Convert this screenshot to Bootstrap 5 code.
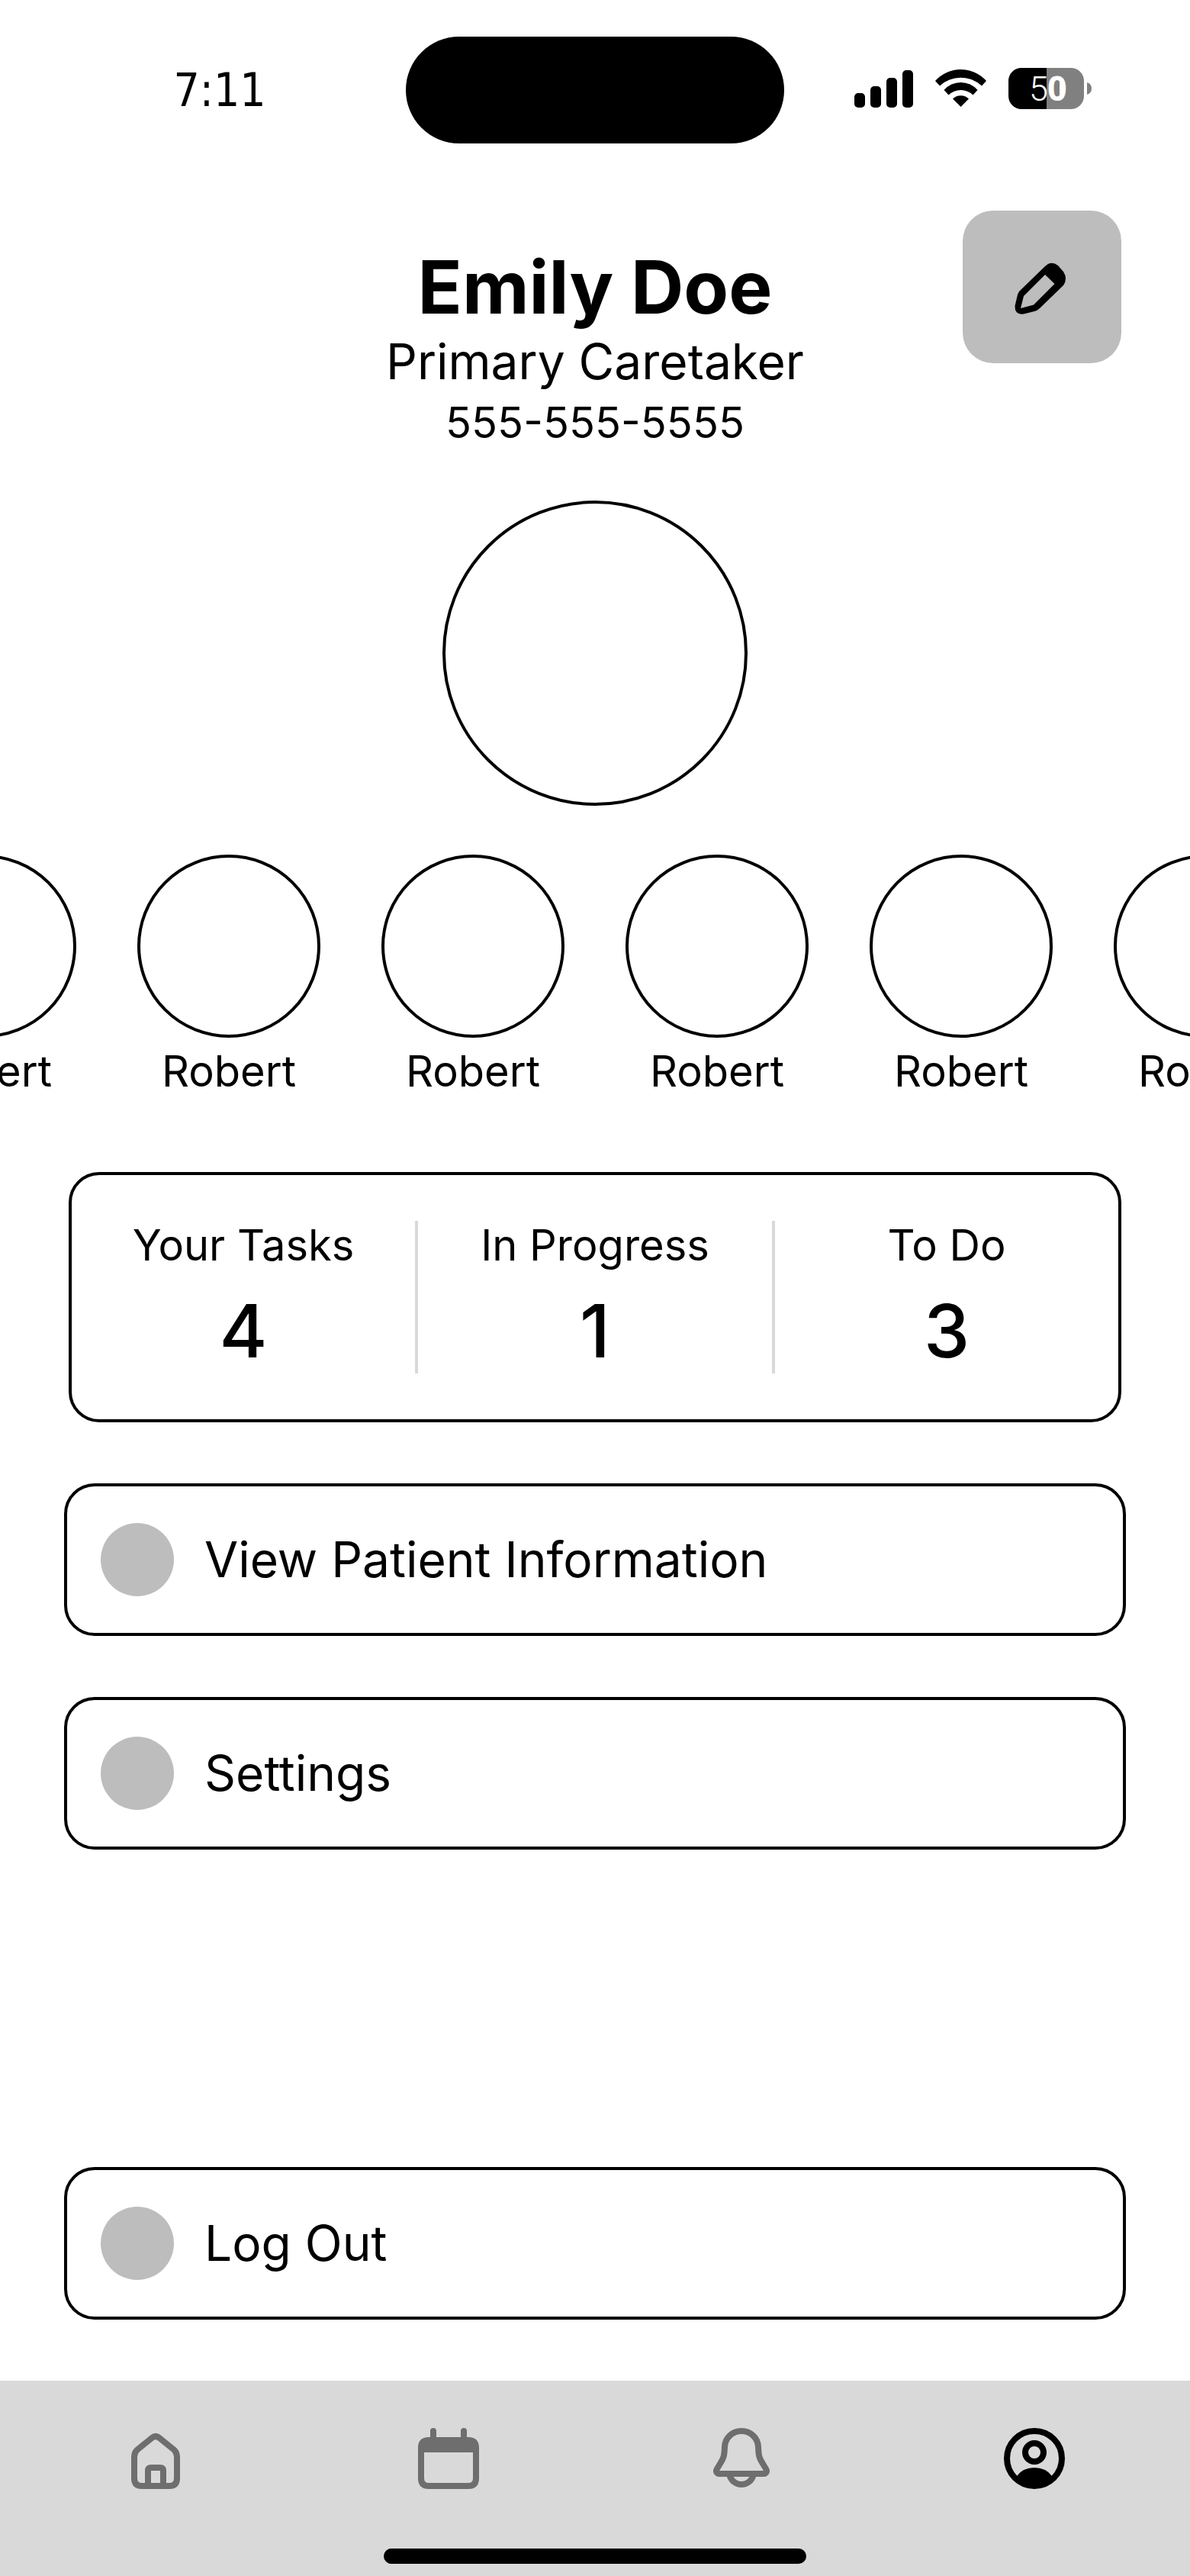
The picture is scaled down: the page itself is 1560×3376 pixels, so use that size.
<!DOCTYPE html>
<html lang="en">
<head>
<meta charset="utf-8">
<meta name="viewport" content="width=device-width, initial-scale=1">
<title>Profile</title>
<link href="https://cdn.jsdelivr.net/npm/bootstrap@5.3.0/dist/css/bootstrap.min.css" rel="stylesheet">
<style>
  body { font-family: Inter, "Liberation Sans", sans-serif; color: #000; background: #fff; }
  svg { display: block; flex: none; }

  /* status bar */
  .status-bar { display: grid; grid-template-columns: 1fr auto 1fr; padding-top: 48px; }
  .status-time { font-family: "DejaVu Sans Condensed", "DejaVu Sans", sans-serif; font-size: 60px; line-height: 64px; padding-left: 44px; }
  .status-icons { gap: 28px; padding-right: 36px; }
  .island { width: 496px; height: 140px; background: #000; }

  /* profile heading */
  .profile-head { display: grid; grid-template-columns: 1fr auto 1fr; padding: 88px 90px 0; }
  .profile-text { grid-column: 2; padding-top: 42px; }
  .profile-name { font-size: 96px; line-height: 116px; font-weight: 700; }
  .profile-role { font-size: 64px; line-height: 80px; }
  .profile-phone { font-size: 56px; line-height: 80px; }
  .edit-btn { width: 208px; height: 200px; border-radius: 40px; background: #bdbdbd; color: #000; }
  .edit-btn:hover { background: #b0b0b0; }

  .ring { border: 4px solid #000; }
  .ring-lg { width: 400px; height: 400px; margin: 62px auto 64px; }
  .ring-sm { width: 240px; height: 240px; margin-bottom: 8px; }
  .people { gap: 80px; }
  .person { font-size: 56px; line-height: 72px; }

  /* task counts */
  .outlined { border: 4px solid #000; border-radius: 40px; }
  .counts { display: grid; grid-template-columns: 225fr 236fr 225fr; margin: 96px 90px 80px; padding: 60px 0; }
  .count-mid { border: solid #d9d9d9; border-width: 0 4px; }
  .count-label { font-size: 56px; line-height: 64px; margin-bottom: 24px; font-weight: 400; }
  .count-value { font-size: 96px; line-height: 112px; font-weight: 500; }

  /* menu rows */
  .menu-list { gap: 80px; padding: 0 84px 80px; }
  .menu-row { gap: 40px; height: 200px; padding: 0 44px; font-size: 64px; line-height: 80px; color: #000; background: #fff; }
  .menu-row:hover { color: #000; background: #f5f5f5; border-color: #000; }
  .menu-dot { width: 96px; height: 96px; background: #bdbdbd; flex: none; }

  /* tab bar */
  .tab-bar { background: #d9d9d9; padding: 54px 12px 16px; }
  .tab-bar a { color: #6e6e6e; }
  .tab-bar a.active { color: #000; }
  .home-indicator { width: 554px; height: 20px; background: #000; margin: 70px auto 0; }
</style>
</head>
<body>
<div class="d-flex flex-column min-vh-100 overflow-hidden">

  <header>
    <div class="status-bar align-items-center">
      <div class="status-time text-center">7:11</div>
      <div class="island rounded-pill"></div>
      <div class="status-icons d-flex justify-content-center align-items-center">
        <svg width="78" height="60" viewBox="0 0 78 60" role="img" aria-label="Signal">
          <rect x="0" y="34" width="14" height="19" rx="5"/><rect x="21" y="25" width="14" height="28" rx="5"/>
          <rect x="42" y="14" width="14" height="39" rx="5"/><rect x="63" y="4" width="14" height="49" rx="5"/>
        </svg>
        <svg width="68" height="60" viewBox="0 0 68 60" role="img" aria-label="Wi-Fi">
          <path d="M0 18A45 45 0 0 1 67 18L61 24.500A40.500 40.500 0 0 0 6 24.500Z"/>
          <path d="M11.500 30A29 29 0 0 1 55.500 30L49.500 36.500A23 23 0 0 0 17.500 36.500Z"/>
          <path d="M23 41.500A15 15 0 0 1 44 41.500L33.500 52Z"/>
        </svg>
        <svg width="110" height="60" viewBox="0 0 110 60" role="img" aria-label="Battery 50 percent">
          <path d="M50 1H17A17 17 0 0 0 0 18V38A17 17 0 0 0 17 55H50Z"/>
          <path fill="#808080" d="M50 1H82A17 17 0 0 1 99 18V38A17 17 0 0 1 82 55H50Z"/>
          <path fill="#808080" d="M103 20Q109 22 109 28Q109 34 103 36Z"/>
          <path stroke="#fff" stroke-width="2" d="M68 18V38"/>
          <text x="27" y="44" fill="#fff" font-family="Roboto" font-weight="300" font-size="45">5</text>
          <text x="51" y="44" fill="#fff" font-family="Open Sans" font-weight="700" font-size="45">0</text>
        </svg>
      </div>
    </div>

    <div class="profile-head">
      <div class="profile-text text-center">
        <h1 class="profile-name mb-0">Emily Doe</h1>
        <div class="profile-role">Primary Caretaker</div>
        <div class="profile-phone">555-555-5555</div>
      </div>
      <button type="button" class="edit-btn btn border-0 p-0 d-flex align-items-center justify-content-center ms-auto" aria-label="Edit profile">
        <svg width="96" height="96" viewBox="0 0 96 96" fill="currentColor">
          <path fill-rule="evenodd" d="M21 51L52 21Q60 13 69 20L76 28Q82 37 76 46L45 76Q42 79 38 80L24 83.500Q12 85 12.500 73L16 58Q17 54 21 51ZM24 60L20 76L37 71.500L64.500 44L52 32Z"/>
        </svg>
      </button>
    </div>
  </header>

  <main class="d-flex flex-column flex-grow-1">
    <div class="ring ring-lg rounded-circle"></div>

    <ul class="people list-unstyled d-flex justify-content-center mb-0">
      <li class="person text-center"><div class="ring ring-sm rounded-circle"></div>Robert</li>
      <li class="person text-center"><div class="ring ring-sm rounded-circle"></div>Robert</li>
      <li class="person text-center"><div class="ring ring-sm rounded-circle"></div>Robert</li>
      <li class="person text-center"><div class="ring ring-sm rounded-circle"></div>Robert</li>
      <li class="person text-center"><div class="ring ring-sm rounded-circle"></div>Robert</li>
      <li class="person text-center"><div class="ring ring-sm rounded-circle"></div>Robert</li>
    </ul>

    <section class="counts outlined text-center" aria-label="Tasks">
      <div><h2 class="count-label">Your Tasks</h2><div class="count-value">4</div></div>
      <div class="count-mid"><h2 class="count-label">In Progress</h2><div class="count-value">1</div></div>
      <div><h2 class="count-label">To Do</h2><div class="count-value">3</div></div>
    </section>

    <div class="menu-list d-flex flex-column flex-grow-1">
      <button type="button" class="menu-row outlined btn d-flex align-items-center text-start"><span class="menu-dot rounded-circle"></span>View Patient Information</button>
      <button type="button" class="menu-row outlined btn d-flex align-items-center text-start"><span class="menu-dot rounded-circle"></span>Settings</button>
      <button type="button" class="menu-row outlined btn d-flex align-items-center text-start mt-auto"><span class="menu-dot rounded-circle"></span>Log Out</button>
    </div>
  </main>

  <footer class="tab-bar">
    <nav class="nav nav-fill flex-nowrap" aria-label="Main">
      <a class="nav-item d-flex justify-content-center" href="#home" aria-label="Home">
        <svg width="96" height="96" viewBox="0 0 96 96" fill="none" stroke="currentColor" stroke-width="8">
          <path d="M20 46Q20 40 24 36.500L42.500 21.500Q48 16.500 53.500 21.500L72 36.500Q76 40 76 46V74Q76 84 66 84H30Q20 84 20 74Z"/>
          <path d="M38 84V64Q38 60 42 60H54Q58 60 58 64V84"/>
        </svg>
      </a>
      <a class="nav-item d-flex justify-content-center" href="#calendar" aria-label="Calendar">
        <svg width="96" height="96" viewBox="0 0 96 96" fill="none" stroke="currentColor" stroke-width="8">
          <path d="M12 34Q12 24 22 24H74Q84 24 84 34V74Q84 84 74 84H22Q12 84 12 74Z"/>
          <path d="M14 32H82" stroke-width="16"/>
          <path d="M28 24V12M68 24V12" stroke-linecap="round"/>
        </svg>
      </a>
      <a class="nav-item d-flex justify-content-center" href="#alerts" aria-label="Notifications">
        <svg width="96" height="96" viewBox="0 0 96 96" fill="none" stroke="currentColor" stroke-width="8">
          <path d="M48 12C36 12 26.500 21 26 33C25.500 44 25 47 20.500 54L16 61.500C13.500 65.500 16 68 19 68H77C80 68 82.500 65.500 80 61.500L75.500 54C71 47 70.500 44 70 33C69.500 21 60 12 48 12Z"/>
          <path d="M32.500 70A16 16 0 0 0 63.500 70"/>
        </svg>
      </a>
      <a class="nav-item d-flex justify-content-center active" href="#profile" aria-label="Profile" aria-current="page">
        <svg width="96" height="96" viewBox="0 0 96 96" fill="none" stroke="currentColor" stroke-width="8">
          <circle cx="48" cy="48" r="36"/>
          <circle cx="48" cy="40" r="12"/>
          <path fill="currentColor" stroke="none" d="M25 71Q33 60 48 60Q63 60 71 71Q62 86 48 86Q34 86 25 71Z"/>
        </svg>
      </a>
    </nav>
    <div class="home-indicator rounded-pill"></div>
  </footer>
</div>
<script src="https://cdn.jsdelivr.net/npm/bootstrap@5.3.0/dist/js/bootstrap.bundle.min.js"></script>
</body>
</html>
